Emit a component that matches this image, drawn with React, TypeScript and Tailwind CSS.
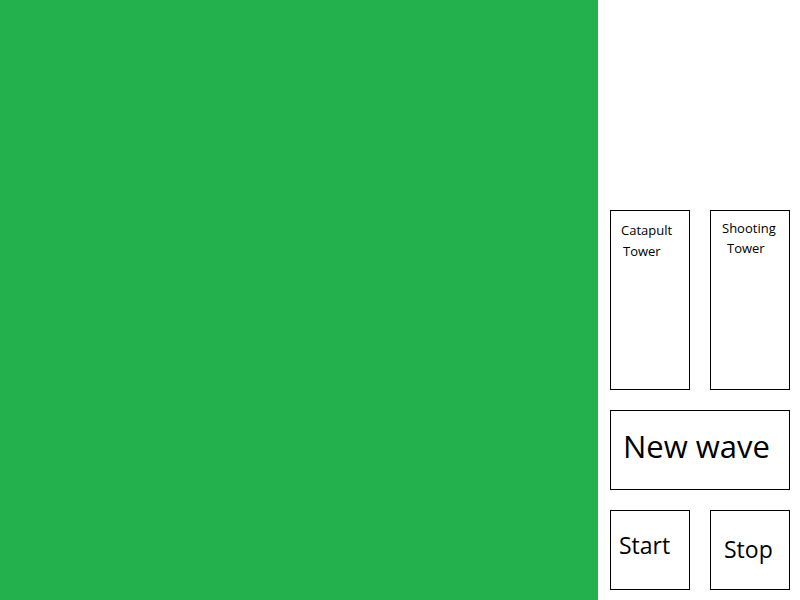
import React from 'react'

const font = { fontFamily: '"Open Sans", "Noto Sans", sans-serif' }

const App: React.FC = () => {
  return (
    <div className="flex w-[800px] h-[600px] bg-white text-black" style={font}>
      <div className="w-[598px] h-full bg-[#22b14c]"></div>
      <div className="flex-1 flex flex-col pt-[210px] pl-3 gap-5">
        <div className="flex gap-5">
          <div className="w-20 h-[180px] border border-black pl-[10px] pt-[9px] text-[13px] leading-[21px]">
            <div>Catapult</div>
            <div className="pl-[2px]">Tower</div>
          </div>
          <div className="w-20 h-[180px] border border-black pl-[11px] pt-[7px] text-[13px] leading-[20px]">
            <div>Shooting</div>
            <div className="pl-[5px]">Tower</div>
          </div>
        </div>
        <div className="w-[180px] h-20 border border-black pl-3 pt-[15px] text-[31px] leading-[40px]">
          New wave
        </div>
        <div className="flex gap-5">
          <div className="w-20 h-20 border border-black pl-2 pt-[19px] text-[23px] leading-[30px]">
            Start
          </div>
          <div className="w-20 h-20 border border-black pl-[13px] pt-[23px] text-[23px] leading-[30px]">
            Stop
          </div>
        </div>
      </div>
    </div>
  )
}

export default App
